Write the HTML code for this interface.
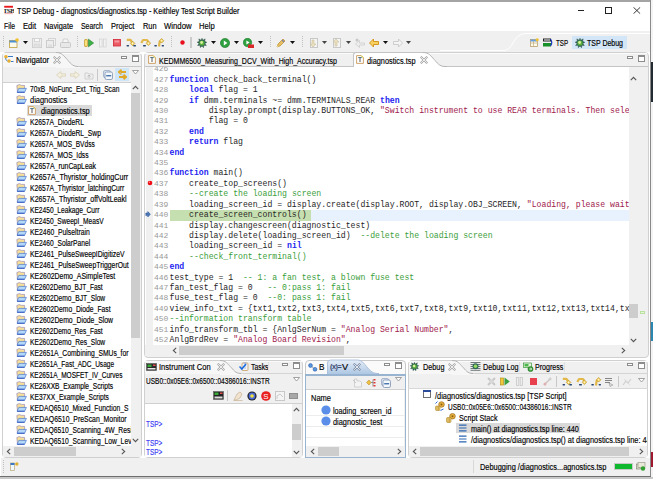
<!DOCTYPE html>
<html><head><meta charset="utf-8"><style>
html,body{margin:0;padding:0;width:653px;height:479px;overflow:hidden;background:#fff}
body{position:relative;font-family:"Liberation Sans", sans-serif}
div,svg{position:absolute}
svg *{position:static}
.t{white-space:pre;font-family:"Liberation Sans", sans-serif}
.u{-webkit-text-stroke:0.15px currentColor}
span{position:static}
</style></head><body>
<div style="left:0px;top:0px;width:653px;height:479px;background:#ffffff"></div>
<div style="left:651px;top:0px;width:2px;height:479px;background:#f4f4f4"></div>
<div style="left:651px;top:62px;width:2px;height:40px;background:#222a32"></div>
<div style="left:651px;top:322px;width:2px;height:19px;background:#2a88b0"></div>
<div style="left:651px;top:452px;width:2px;height:15px;background:#a01830"></div>
<div style="left:0px;top:477px;width:653px;height:2px;background:#c8c8c8"></div>
<div style="left:0px;top:0px;width:651px;height:2px;background:#a4a4a4"></div>
<div style="left:650px;top:0px;width:1px;height:477px;background:#8a8a8a"></div>
<div style="left:0px;top:476px;width:651px;height:1px;background:#6e6e6e"></div>
<svg style="left:4px;top:5px" width="10" height="10" viewBox="0 0 10 10"><rect x="0.2" y="0.8" width="8.8" height="1.9" fill="#e8181c"/><text x="4.6" y="8.4" font-size="7" font-family="Liberation Serif" font-weight="bold" text-anchor="middle" fill="#2a2a2a" letter-spacing="-0.6" transform="scale(1,0.95)">TSB</text><rect x="0.5" y="8.4" width="8.2" height="0.7" fill="#f08080"/></svg>
<div class="t u" style="left:16.90px;top:5.80px;line-height:10px;font-size:8.4px;transform:scaleX(0.8648);transform-origin:0 0;color:#000">TSP Debug - diagnostics/diagnostics.tsp - Keithley Test Script Builder</div>
<div style="left:578px;top:10px;width:6px;height:1px;background:#222"></div>
<div style="left:605px;top:7px;width:6px;height:6px;border:1px solid #222;box-sizing:border-box;width:7px;height:7px"></div>
<svg style="left:633px;top:7px" width="8" height="7" viewBox="0 0 8 7"><path d="M0.5 0.3 L7.2 6.7 M7.2 0.3 L0.5 6.7" stroke="#222" stroke-width="0.9"/></svg>
<div class="t u" style="left:3.60px;top:21.30px;line-height:10px;font-size:8.4px;transform:scaleX(0.8201);transform-origin:0 0;color:#000">File</div>
<div class="t u" style="left:22.90px;top:21.30px;line-height:10px;font-size:8.4px;transform:scaleX(0.9120);transform-origin:0 0;color:#000">Edit</div>
<div class="t u" style="left:43.80px;top:21.30px;line-height:10px;font-size:8.4px;transform:scaleX(0.8778);transform-origin:0 0;color:#000">Navigate</div>
<div class="t u" style="left:81.00px;top:21.30px;line-height:10px;font-size:8.4px;transform:scaleX(0.8266);transform-origin:0 0;color:#000">Search</div>
<div class="t u" style="left:111.00px;top:21.30px;line-height:10px;font-size:8.4px;transform:scaleX(0.8913);transform-origin:0 0;color:#000">Project</div>
<div class="t u" style="left:142.50px;top:21.30px;line-height:10px;font-size:8.4px;transform:scaleX(0.8826);transform-origin:0 0;color:#000">Run</div>
<div class="t u" style="left:163.80px;top:21.30px;line-height:10px;font-size:8.4px;transform:scaleX(0.9272);transform-origin:0 0;color:#000">Window</div>
<div class="t u" style="left:199.30px;top:21.30px;line-height:10px;font-size:8.4px;transform:scaleX(0.9088);transform-origin:0 0;color:#000">Help</div>
<div style="left:0px;top:31px;width:650px;height:21px;background:#f0f0f0"></div>
<svg style="left:3px;top:36px" width="2" height="12"><rect x="0" y="0" width="1" height="1" fill="#c0c0c0"/><rect x="0" y="2" width="1" height="1" fill="#c0c0c0"/><rect x="0" y="4" width="1" height="1" fill="#c0c0c0"/><rect x="0" y="6" width="1" height="1" fill="#c0c0c0"/><rect x="0" y="8" width="1" height="1" fill="#c0c0c0"/><rect x="0" y="10" width="1" height="1" fill="#c0c0c0"/></svg>
<svg style="left:9px;top:38px" width="10" height="10" viewBox="0 0 10 10"><rect x="0.5" y="2.5" width="7.5" height="7" fill="#fdfbe8" stroke="#c8b060" stroke-width="1"/><rect x="0.5" y="2.5" width="7.5" height="2" fill="#4a90d9"/><circle cx="8" cy="2" r="1.8" fill="#f0c030"/></svg>
<svg style="left:23px;top:41px" width="5" height="3" viewBox="0 0 5 3"><path d="M0 0 L5 0 L2.5 3 Z" fill="#111"/></svg>
<svg style="left:32px;top:38px" width="10" height="10" viewBox="0 0 10 10"><rect x="0.5" y="0.5" width="9" height="9" fill="#eeeeee" stroke="#d0d0d0"/><rect x="2.5" y="0.5" width="5" height="3.2" fill="#fafafa" stroke="#d4d4d4"/><rect x="2" y="6" width="6" height="3.5" fill="#e2e2e2" stroke="#d4d4d4" stroke-width="0.6"/></svg>
<svg style="left:46px;top:38px" width="10" height="10" viewBox="0 0 10 10"><rect x="2.5" y="0.5" width="7" height="7" fill="#f0f0f0" stroke="#d4d4d4"/><rect x="0.5" y="2.5" width="7" height="7" fill="#ececec" stroke="#cccccc"/><rect x="2" y="6.5" width="4" height="2.5" fill="#dedede"/></svg>
<svg style="left:60px;top:38px" width="11" height="10" viewBox="0 0 11 10"><path d="M2.5 4.5 L3.5 1 L7.5 1 L8.5 4.5" fill="#f6f6f6" stroke="#d0d0d0"/><rect x="0.5" y="4.5" width="10" height="5" rx="1" fill="#e8e8e8" stroke="#c8c8c8"/></svg>
<svg style="left:77px;top:36px" width="2" height="12"><rect x="0" y="0" width="1" height="1" fill="#c0c0c0"/><rect x="0" y="2" width="1" height="1" fill="#c0c0c0"/><rect x="0" y="4" width="1" height="1" fill="#c0c0c0"/><rect x="0" y="6" width="1" height="1" fill="#c0c0c0"/><rect x="0" y="8" width="1" height="1" fill="#c0c0c0"/><rect x="0" y="10" width="1" height="1" fill="#c0c0c0"/></svg>
<svg style="left:84px;top:38px" width="10" height="10" viewBox="0 0 10 10"><rect x="0.6" y="1.5" width="2.8" height="7" rx="0.6" fill="#f4d050" stroke="#c09020" stroke-width="0.7"/><rect x="1.4" y="2.5" width="1.2" height="5" fill="#fff0a0"/><path d="M4.5 1.2 L9.6 5 L4.5 8.8 Z" fill="#40b048" stroke="#208028" stroke-width="0.6"/></svg>
<svg style="left:99px;top:38px" width="8" height="10" viewBox="0 0 8 10"><rect x="0.5" y="1" width="2.6" height="8" fill="#f2f2f2" stroke="#d4d4d4" stroke-width="0.8"/><rect x="4.5" y="1" width="2.6" height="8" fill="#f2f2f2" stroke="#d4d4d4" stroke-width="0.8"/></svg>
<svg style="left:113px;top:39px" width="8" height="8" viewBox="0 0 8 8"><rect x="0.4" y="0.4" width="7" height="6.6" fill="#ec5a64" stroke="#d02838" stroke-width="0.8"/><rect x="1.5" y="1.5" width="4.8" height="2" fill="#f59aa0"/></svg>
<svg style="left:126px;top:38px" width="11" height="10" viewBox="0 0 11 10"><path d="M0.8 1.8 L4.5 1.8 L6.3 4.6" stroke="#e2b84a" stroke-width="2.2" fill="none" stroke-linejoin="round"/><path d="M6.6 3.1000000000000005 L8.899999999999999 5.4 L6.6 7.7 L4.3 5.4 Z" fill="#f4d060" stroke="#b89028" stroke-width="0.6"/><circle cx="6.6" cy="5.4" r="0.8" fill="#fff8d0"/><rect x="0.5" y="7" width="2.6" height="1.4" rx="0.6" fill="#2a4670"/><rect x="7.2" y="7" width="2.8" height="1.4" rx="0.6" fill="#2a4670"/></svg>
<svg style="left:140px;top:38px" width="11" height="10" viewBox="0 0 11 10"><path d="M1.3 5 L3 2 L7 2 L8.4 4.2" stroke="#e2b84a" stroke-width="2.2" fill="none" stroke-linejoin="round"/><path d="M8.4 2.9000000000000004 L10.7 5.2 L8.4 7.5 L6.1000000000000005 5.2 Z" fill="#f4d060" stroke="#b89028" stroke-width="0.6"/><circle cx="8.4" cy="5.2" r="0.8" fill="#fff8d0"/><rect x="3" y="7" width="3" height="1.4" rx="0.6" fill="#2a4670"/></svg>
<svg style="left:154px;top:38px" width="11" height="10" viewBox="0 0 11 10"><rect x="0.3" y="7" width="2.6" height="1.4" rx="0.6" fill="#2a4670"/><path d="M5 8.5 L5.6 4 L7.2 3" stroke="#e2b84a" stroke-width="2.2" fill="none" stroke-linejoin="round"/><path d="M7.6 0.5 L9.899999999999999 2.8 L7.6 5.1 L5.3 2.8 Z" fill="#f4d060" stroke="#b89028" stroke-width="0.6"/><circle cx="7.6" cy="2.8" r="0.8" fill="#fff8d0"/><rect x="7.6" y="7" width="2.4" height="1.4" rx="0.6" fill="#2a4670"/></svg>
<svg style="left:171px;top:36px" width="2" height="12"><rect x="0" y="0" width="1" height="1" fill="#c0c0c0"/><rect x="0" y="2" width="1" height="1" fill="#c0c0c0"/><rect x="0" y="4" width="1" height="1" fill="#c0c0c0"/><rect x="0" y="6" width="1" height="1" fill="#c0c0c0"/><rect x="0" y="8" width="1" height="1" fill="#c0c0c0"/><rect x="0" y="10" width="1" height="1" fill="#c0c0c0"/></svg>
<svg style="left:180px;top:40px" width="5" height="5" viewBox="0 0 5 5"><circle cx="2.5" cy="2.5" r="2.2" fill="#e8101c"/></svg>
<div style="left:190px;top:37px;width:2px;height:11px;background:#cacaca"></div>
<svg style="left:197px;top:38px" width="10" height="10" viewBox="0 0 10 10"><g transform="scale(1.0)"><path d="M5 0.3 L5.9 2.2 L8.2 0.9 L7.6 3.3 L9.8 4.3 L7.9 5.4 L9.3 7.6 L6.9 7.3 L6.5 9.7 L5 8 L3.3 9.6 L3.1 7.3 L0.6 7.5 L2.1 5.4 L0.2 4.2 L2.4 3.3 L1.8 0.9 L4.1 2.2 Z" fill="#2e6a58" stroke="#1a3a30" stroke-width="0.4"/><circle cx="5" cy="5" r="2.6" fill="#5aae3a"/><circle cx="4.6" cy="4.5" r="1.4" fill="#d8f0a0"/></g></svg>
<svg style="left:211px;top:41px" width="5" height="3" viewBox="0 0 5 3"><path d="M0 0 L5 0 L2.5 3 Z" fill="#111"/></svg>
<svg style="left:220px;top:38px" width="10" height="10" viewBox="0 0 10 10"><circle cx="5" cy="5" r="4.6" fill="#2ea040" stroke="#1a7a2a" stroke-width="0.6"/><path d="M3.8 2.6 L7.4 5 L3.8 7.4 Z" fill="#fff"/></svg>
<svg style="left:234px;top:41px" width="5" height="3" viewBox="0 0 5 3"><path d="M0 0 L5 0 L2.5 3 Z" fill="#111"/></svg>
<svg style="left:243px;top:38px" width="11" height="10" viewBox="0 0 11 10"><circle cx="4.5" cy="4.5" r="4.2" fill="#2ea040" stroke="#1a7a2a" stroke-width="0.6"/><path d="M3.4 2.4 L6.6 4.5 L3.4 6.6 Z" fill="#fff"/><rect x="5" y="6.5" width="6" height="3.5" fill="#d82828"/></svg>
<svg style="left:258px;top:41px" width="5" height="3" viewBox="0 0 5 3"><path d="M0 0 L5 0 L2.5 3 Z" fill="#111"/></svg>
<svg style="left:270px;top:36px" width="2" height="12"><rect x="0" y="0" width="1" height="1" fill="#c0c0c0"/><rect x="0" y="2" width="1" height="1" fill="#c0c0c0"/><rect x="0" y="4" width="1" height="1" fill="#c0c0c0"/><rect x="0" y="6" width="1" height="1" fill="#c0c0c0"/><rect x="0" y="8" width="1" height="1" fill="#c0c0c0"/><rect x="0" y="10" width="1" height="1" fill="#c0c0c0"/></svg>
<svg style="left:276px;top:38px" width="10" height="10" viewBox="0 0 10 10"><path d="M1 9 L2 6 L7 1 L9 3 L4 8 Z" fill="#e8c060" stroke="#b08020" stroke-width="0.6"/><path d="M6 2 L8 4" stroke="#8080a0" stroke-width="1.2"/><path d="M1 9 L2.5 8.5 L1.5 7.5 Z" fill="#fff8c0"/></svg>
<svg style="left:290px;top:41px" width="5" height="3" viewBox="0 0 5 3"><path d="M0 0 L5 0 L2.5 3 Z" fill="#111"/></svg>
<svg style="left:302px;top:36px" width="2" height="12"><rect x="0" y="0" width="1" height="1" fill="#c0c0c0"/><rect x="0" y="2" width="1" height="1" fill="#c0c0c0"/><rect x="0" y="4" width="1" height="1" fill="#c0c0c0"/><rect x="0" y="6" width="1" height="1" fill="#c0c0c0"/><rect x="0" y="8" width="1" height="1" fill="#c0c0c0"/><rect x="0" y="10" width="1" height="1" fill="#c0c0c0"/></svg>
<svg style="left:308px;top:38px" width="10" height="10" viewBox="0 0 10 10"><rect x="2.5" y="0.5" width="7" height="9" fill="#f4f4f4" stroke="#c8c8c8"/><path d="M4 2 L4 6 L2 6 L5 9 L8 6 L6 6 L6 2 Z" fill="#e8e0c0" stroke="#c8b890" stroke-width="0.5"/></svg>
<svg style="left:322px;top:41px" width="5" height="3" viewBox="0 0 5 3"><path d="M0 0 L5 0 L2.5 3 Z" fill="#444"/></svg>
<svg style="left:331px;top:38px" width="10" height="10" viewBox="0 0 10 10"><rect x="2.5" y="0.5" width="7" height="9" fill="#f4f4f4" stroke="#c8c8c8"/><path d="M4 8 L4 4 L2 4 L5 1 L8 4 L6 4 L6 8 Z" fill="#e8e0c0" stroke="#c8b890" stroke-width="0.5"/></svg>
<svg style="left:346px;top:41px" width="5" height="3" viewBox="0 0 5 3"><path d="M0 0 L5 0 L2.5 3 Z" fill="#444"/></svg>
<svg style="left:355px;top:38px" width="10" height="10" viewBox="0 0 10 10"><path d="M9.5 5 L4.5 5 L4.5 2.5 L0.5 6 L4.5 9.5 L4.5 7 L9.5 7 Z" fill="#eeeeee" stroke="#c8c8c8" stroke-width="0.7"/><circle cx="2" cy="2" r="1.5" fill="#c8c8c8"/></svg>
<svg style="left:369px;top:38px" width="10" height="10" viewBox="0 0 10 10"><path d="M9.5 3.5 L4.5 3.5 L4.5 1 L0.5 5 L4.5 9 L4.5 6.5 L9.5 6.5 Z" fill="#f8d060" stroke="#d09010" stroke-width="0.9"/></svg>
<svg style="left:383px;top:41px" width="5" height="3" viewBox="0 0 5 3"><path d="M0 0 L5 0 L2.5 3 Z" fill="#111"/></svg>
<svg style="left:393px;top:38px" width="10" height="10" viewBox="0 0 10 10"><path d="M0.5 3.5 L5.5 3.5 L5.5 1 L9.5 5 L5.5 9 L5.5 6.5 L0.5 6.5 Z" fill="#f4f4f4" stroke="#c8c8c8" stroke-width="0.9"/></svg>
<svg style="left:406px;top:41px" width="5" height="3" viewBox="0 0 5 3"><path d="M0 0 L5 0 L2.5 3 Z" fill="#444"/></svg>
<svg style="left:440px;top:30px" width="210" height="23" viewBox="0 0 210 23"><path d="M0 20.5 L64 20.5 C74 20.5 72 3.5 86 3.5 L210 3.5" stroke="#ffffff" stroke-width="1" fill="none"/></svg>
<svg style="left:530px;top:38px" width="9" height="9" viewBox="0 0 9 9"><rect x="0.5" y="1.5" width="7" height="7" fill="#fdfbe8" stroke="#b8a070" stroke-width="0.8"/><rect x="0.5" y="1.5" width="7" height="2" fill="#6aa0e0"/><path d="M1 5 L7 5 M3.5 3 L3.5 8.5" stroke="#b8a070" stroke-width="0.6"/><circle cx="7.2" cy="1.8" r="1.6" fill="#f0c030"/></svg>
<svg style="left:543px;top:38px" width="10" height="9" viewBox="0 0 10 9"><rect x="0" y="0.5" width="8" height="3" fill="#222"/><rect x="1" y="1.5" width="6" height="1" fill="#fff"/><rect x="0" y="5" width="8" height="3.5" fill="#189028"/><path d="M7.5 1 Q10 4.5 7.5 8" stroke="#1838c0" stroke-width="1.2" fill="none"/></svg>
<div class="t u" style="left:555.60px;top:38.30px;line-height:10px;font-size:8.4px;transform:scaleX(0.7468);transform-origin:0 0;color:#000">TSP</div>
<div style="left:572px;top:36px;width:55px;height:13px;background:#d2e6f8"></div>
<svg style="left:575px;top:38px" width="10" height="10" viewBox="0 0 10 10"><g transform="scale(1.0)"><path d="M5 0.3 L5.9 2.2 L8.2 0.9 L7.6 3.3 L9.8 4.3 L7.9 5.4 L9.3 7.6 L6.9 7.3 L6.5 9.7 L5 8 L3.3 9.6 L3.1 7.3 L0.6 7.5 L2.1 5.4 L0.2 4.2 L2.4 3.3 L1.8 0.9 L4.1 2.2 Z" fill="#2e6a58" stroke="#1a3a30" stroke-width="0.4"/><circle cx="5" cy="5" r="2.6" fill="#5aae3a"/><circle cx="4.6" cy="4.5" r="1.4" fill="#d8f0a0"/></g></svg>
<div class="t u" style="left:587.40px;top:38.30px;line-height:10px;font-size:8.4px;transform:scaleX(0.8343);transform-origin:0 0;color:#000">TSP Debug</div>
<div style="left:1px;top:458px;width:649px;height:18px;background:#f0f0f0"></div>
<div style="left:2px;top:52px;width:140px;height:406px;border:1px solid #d0d0d0;border-radius:4px;box-sizing:border-box;background:#f0f0f0"></div>
<div style="left:3px;top:53px;width:138px;height:1px;background:#fbfbfb"></div>
<div style="left:3px;top:53px;width:54px;height:14px;background:#f7f7f7;border-top-left-radius:3px"></div>
<svg style="left:56px;top:52px" width="24" height="16" viewBox="0 0 24 16"><path d="M0 0.5 C6.16 0.5 7.92 4.20 11.00 7.28 C14.08 10.36 15.84 14.50 22 14.5 L24 14.5 L24 16 L0 16 Z" fill="#f7f7f7"/><path d="M0 0.5 C6.16 0.5 7.92 4.20 11.00 7.28 C14.08 10.36 15.84 14.50 22 14.5 L24 14.5" stroke="#b4b4b4" stroke-width="1" fill="none"/></svg>
<div style="left:78px;top:66px;width:63px;height:1px;background:#c8c8c8"></div>
<svg style="left:4px;top:55px" width="10" height="8" viewBox="0 0 10 8"><circle cx="2" cy="1.8" r="1.8" fill="#e8b030"/><circle cx="5" cy="6" r="1.8" fill="#e8b030"/><path d="M4 1.5 L9 1.5 M7 6.5 L9.5 6.5" stroke="#3a78c8" stroke-width="1.2"/><path d="M1.5 3 Q1.5 5.5 3.5 6" stroke="#3a78c8" stroke-width="0.8" fill="none"/></svg>
<div class="t u" style="left:16.00px;top:55.30px;line-height:10px;font-size:8.4px;transform:scaleX(0.9208);transform-origin:0 0;color:#000">Navigator</div>
<svg style="left:53px;top:56px" width="8" height="8" viewBox="0 0 8 8"><path d="M1.5 1.5 L6.5 6.5 M6.5 1.5 L1.5 6.5" stroke="#a8a8a8" stroke-width="2.2" stroke-linecap="square"/><path d="M1.5 1.5 L6.5 6.5 M6.5 1.5 L1.5 6.5" stroke="#fff" stroke-width="0.8" stroke-linecap="square"/></svg>
<div style="left:121px;top:56px;width:6px;height:3px;border:1px solid #8c8c8c;box-sizing:border-box;background:#fff"></div>
<div style="left:132px;top:55px;width:7px;height:7px;border:1px solid #8c8c8c;border-top-width:2px;box-sizing:border-box;background:#fff"></div>
<svg style="left:56px;top:71px" width="10" height="8" viewBox="0 0 10 8"><path d="M9.5 2.8 L5 2.8 L5 0.5 L0.5 4 L5 7.5 L5 5.2 L9.5 5.2 Z" fill="#f4f0e0" stroke="#d8d0b8" stroke-width="0.8"/></svg>
<svg style="left:70px;top:71px" width="10" height="8" viewBox="0 0 10 8"><path d="M0.5 2.8 L5 2.8 L5 0.5 L9.5 4 L5 7.5 L5 5.2 L0.5 5.2 Z" fill="#f4f0e0" stroke="#d8d0b8" stroke-width="0.8"/></svg>
<svg style="left:84px;top:70px" width="10" height="10" viewBox="0 0 10 10"><path d="M1 3 L4 3 L5 4 L9 4 L9 9 L1 9 Z" fill="#eeeeee" stroke="#c8c8c8" stroke-width="0.8"/><path d="M5 8 L5 5 M3.5 6.5 L5 5 L6.5 6.5" stroke="#b8b8b8" stroke-width="0.9" fill="none"/></svg>
<div style="left:97px;top:69px;width:1px;height:12px;background:#c8c8c8"></div>
<svg style="left:103px;top:70px" width="10" height="10" viewBox="0 0 10 10"><rect x="0.5" y="0.5" width="7" height="7" rx="1.5" fill="#dde6f0" stroke="#8aa0c0" stroke-width="0.7"/><rect x="2" y="2" width="7.5" height="7.5" rx="1.5" fill="#f4f8fc" stroke="#7890b0" stroke-width="0.8"/><rect x="3.2" y="5.1" width="5" height="1.3" fill="#3a6aa8"/></svg>
<div style="left:115px;top:68px;width:14px;height:13px;background:#cfe5f8"></div>
<svg style="left:117px;top:69px" width="11" height="11" viewBox="0 0 11 11"><path d="M9 3 L3 3 M4.5 0.8 L1.8 3 L4.5 5.2" stroke="#e0a828" stroke-width="1.8" fill="none" stroke-linejoin="round"/><path d="M3.5 3.5 L6 7" stroke="#c8c8d0" stroke-width="1"/><path d="M2 8 L8 8 M6.5 5.8 L9.2 8 L6.5 10.2" stroke="#e0a828" stroke-width="1.8" fill="none" stroke-linejoin="round"/></svg>
<svg style="left:132px;top:70px" width="7" height="5" viewBox="0 0 7 5"><path d="M0.5 0.5 L6.5 0.5 L3.5 4 Z" fill="#fff" stroke="#8c8c8c" stroke-width="0.8"/></svg>
<div style="left:2px;top:82px;width:140px;height:1px;background:#d0d0d0"></div>
<div style="left:3px;top:83px;width:138px;height:363px;background:#fff"></div>
<div style="left:3px;top:82px;width:128px;height:364px;overflow:hidden">
<svg style="left:13px;top:1.5px" width="11" height="9" viewBox="0 0 11 9"><path d="M0.8 1.6 L3.2 0.6 L5.6 1.4 L8.6 1.4 L8.6 4.5 L1.5 7.8 Z" fill="#f8e098" stroke="#8a7ab0" stroke-width="0.6"/><path d="M1 8.2 L2.8 4.4 L10.4 4.4 L8.6 8.2 Z" fill="#b4d8f8" stroke="#4a78d0" stroke-width="0.7"/><path d="M1.2 8.3 L8.6 8.3" stroke="#2a50c0" stroke-width="0.9"/></svg>
<div class="t u" style="left:27.10px;top:1.80px;line-height:10px;font-size:8.4px;transform:scaleX(0.7952);transform-origin:0 0;color:#000">70xB_NoFunc_Ext_Trig_Scan</div>
<svg style="left:13px;top:12.5px" width="11" height="9" viewBox="0 0 11 9"><path d="M0.8 1.6 L3.2 0.6 L5.6 1.4 L8.6 1.4 L8.6 4.5 L1.5 7.8 Z" fill="#f8e098" stroke="#8a7ab0" stroke-width="0.6"/><path d="M1 8.2 L2.8 4.4 L10.4 4.4 L8.6 8.2 Z" fill="#b4d8f8" stroke="#4a78d0" stroke-width="0.7"/><path d="M1.2 8.3 L8.6 8.3" stroke="#2a50c0" stroke-width="0.9"/></svg>
<div class="t u" style="left:27.10px;top:12.80px;line-height:10px;font-size:8.4px;transform:scaleX(0.8900);transform-origin:0 0;color:#000">diagnostics</div>
<div style="left:24px;top:22.5px;width:65px;height:11px;background:#d9d9d9"></div>
<svg style="left:25px;top:24px" width="8" height="9" viewBox="0 0 8 9"><path d="M0.6 0.6 L5.2 0.6 L7.4 2.8 L7.4 8.4 L0.6 8.4 Z" fill="#ffffff" stroke="#c8985a" stroke-width="0.9"/><path d="M5.2 0.6 L7.4 2.8" stroke="#d8d040" stroke-width="1"/><path d="M2.2 2.6 L5.8 2.6" stroke="#3a6a7a" stroke-width="0.9"/><path d="M4 2.6 L4 7" stroke="#303038" stroke-width="0.8"/></svg>
<div class="t u" style="left:38.30px;top:23.80px;line-height:10px;font-size:8.4px;transform:scaleX(0.8783);transform-origin:0 0;color:#000">diagnostics.tsp</div>
<svg style="left:13px;top:34.5px" width="11" height="9" viewBox="0 0 11 9"><path d="M0.8 1.6 L3.2 0.6 L5.6 1.4 L8.6 1.4 L8.6 4.5 L1.5 7.8 Z" fill="#f8e098" stroke="#8a7ab0" stroke-width="0.6"/><path d="M1 8.2 L2.8 4.4 L10.4 4.4 L8.6 8.2 Z" fill="#b4d8f8" stroke="#4a78d0" stroke-width="0.7"/><path d="M1.2 8.3 L8.6 8.3" stroke="#2a50c0" stroke-width="0.9"/></svg>
<div class="t u" style="left:27.10px;top:34.80px;line-height:10px;font-size:8.4px;transform:scaleX(0.8045);transform-origin:0 0;color:#000">K2657A_DiodeRL</div>
<svg style="left:13px;top:45.5px" width="11" height="9" viewBox="0 0 11 9"><path d="M0.8 1.6 L3.2 0.6 L5.6 1.4 L8.6 1.4 L8.6 4.5 L1.5 7.8 Z" fill="#f8e098" stroke="#8a7ab0" stroke-width="0.6"/><path d="M1 8.2 L2.8 4.4 L10.4 4.4 L8.6 8.2 Z" fill="#b4d8f8" stroke="#4a78d0" stroke-width="0.7"/><path d="M1.2 8.3 L8.6 8.3" stroke="#2a50c0" stroke-width="0.9"/></svg>
<div class="t u" style="left:27.10px;top:45.80px;line-height:10px;font-size:8.4px;transform:scaleX(0.8067);transform-origin:0 0;color:#000">K2657A_DiodeRL_Swp</div>
<svg style="left:13px;top:56.5px" width="11" height="9" viewBox="0 0 11 9"><path d="M0.8 1.6 L3.2 0.6 L5.6 1.4 L8.6 1.4 L8.6 4.5 L1.5 7.8 Z" fill="#f8e098" stroke="#8a7ab0" stroke-width="0.6"/><path d="M1 8.2 L2.8 4.4 L10.4 4.4 L8.6 8.2 Z" fill="#b4d8f8" stroke="#4a78d0" stroke-width="0.7"/><path d="M1.2 8.3 L8.6 8.3" stroke="#2a50c0" stroke-width="0.9"/></svg>
<div class="t u" style="left:27.10px;top:56.80px;line-height:10px;font-size:8.4px;transform:scaleX(0.7853);transform-origin:0 0;color:#000">K2657A_MOS_BVdss</div>
<svg style="left:13px;top:67.5px" width="11" height="9" viewBox="0 0 11 9"><path d="M0.8 1.6 L3.2 0.6 L5.6 1.4 L8.6 1.4 L8.6 4.5 L1.5 7.8 Z" fill="#f8e098" stroke="#8a7ab0" stroke-width="0.6"/><path d="M1 8.2 L2.8 4.4 L10.4 4.4 L8.6 8.2 Z" fill="#b4d8f8" stroke="#4a78d0" stroke-width="0.7"/><path d="M1.2 8.3 L8.6 8.3" stroke="#2a50c0" stroke-width="0.9"/></svg>
<div class="t u" style="left:27.10px;top:67.80px;line-height:10px;font-size:8.4px;transform:scaleX(0.7957);transform-origin:0 0;color:#000">K2657A_MOS_Idss</div>
<svg style="left:13px;top:78.5px" width="11" height="9" viewBox="0 0 11 9"><path d="M0.8 1.6 L3.2 0.6 L5.6 1.4 L8.6 1.4 L8.6 4.5 L1.5 7.8 Z" fill="#f8e098" stroke="#8a7ab0" stroke-width="0.6"/><path d="M1 8.2 L2.8 4.4 L10.4 4.4 L8.6 8.2 Z" fill="#b4d8f8" stroke="#4a78d0" stroke-width="0.7"/><path d="M1.2 8.3 L8.6 8.3" stroke="#2a50c0" stroke-width="0.9"/></svg>
<div class="t u" style="left:27.10px;top:78.80px;line-height:10px;font-size:8.4px;transform:scaleX(0.8242);transform-origin:0 0;color:#000">K2657A_runCapLeak</div>
<svg style="left:13px;top:89.5px" width="11" height="9" viewBox="0 0 11 9"><path d="M0.8 1.6 L3.2 0.6 L5.6 1.4 L8.6 1.4 L8.6 4.5 L1.5 7.8 Z" fill="#f8e098" stroke="#8a7ab0" stroke-width="0.6"/><path d="M1 8.2 L2.8 4.4 L10.4 4.4 L8.6 8.2 Z" fill="#b4d8f8" stroke="#4a78d0" stroke-width="0.7"/><path d="M1.2 8.3 L8.6 8.3" stroke="#2a50c0" stroke-width="0.9"/></svg>
<div class="t u" style="left:27.10px;top:89.80px;line-height:10px;font-size:8.4px;transform:scaleX(0.8541);transform-origin:0 0;color:#000">K2657A_Thyristor_holdingCurr</div>
<svg style="left:13px;top:100.5px" width="11" height="9" viewBox="0 0 11 9"><path d="M0.8 1.6 L3.2 0.6 L5.6 1.4 L8.6 1.4 L8.6 4.5 L1.5 7.8 Z" fill="#f8e098" stroke="#8a7ab0" stroke-width="0.6"/><path d="M1 8.2 L2.8 4.4 L10.4 4.4 L8.6 8.2 Z" fill="#b4d8f8" stroke="#4a78d0" stroke-width="0.7"/><path d="M1.2 8.3 L8.6 8.3" stroke="#2a50c0" stroke-width="0.9"/></svg>
<div class="t u" style="left:27.10px;top:100.80px;line-height:10px;font-size:8.4px;transform:scaleX(0.8076);transform-origin:0 0;color:#000">K2657A_Thyristor_latchingCurr</div>
<svg style="left:13px;top:111.5px" width="11" height="9" viewBox="0 0 11 9"><path d="M0.8 1.6 L3.2 0.6 L5.6 1.4 L8.6 1.4 L8.6 4.5 L1.5 7.8 Z" fill="#f8e098" stroke="#8a7ab0" stroke-width="0.6"/><path d="M1 8.2 L2.8 4.4 L10.4 4.4 L8.6 8.2 Z" fill="#b4d8f8" stroke="#4a78d0" stroke-width="0.7"/><path d="M1.2 8.3 L8.6 8.3" stroke="#2a50c0" stroke-width="0.9"/></svg>
<div class="t u" style="left:27.10px;top:111.80px;line-height:10px;font-size:8.4px;transform:scaleX(0.8413);transform-origin:0 0;color:#000">K2657A_Thyristor_offVoltLeakl</div>
<svg style="left:13px;top:122.5px" width="11" height="9" viewBox="0 0 11 9"><path d="M0.8 1.6 L3.2 0.6 L5.6 1.4 L8.6 1.4 L8.6 4.5 L1.5 7.8 Z" fill="#f8e098" stroke="#8a7ab0" stroke-width="0.6"/><path d="M1 8.2 L2.8 4.4 L10.4 4.4 L8.6 8.2 Z" fill="#b4d8f8" stroke="#4a78d0" stroke-width="0.7"/><path d="M1.2 8.3 L8.6 8.3" stroke="#2a50c0" stroke-width="0.9"/></svg>
<div class="t u" style="left:27.10px;top:122.80px;line-height:10px;font-size:8.4px;transform:scaleX(0.7939);transform-origin:0 0;color:#000">KE2450_Leakage_Curr</div>
<svg style="left:13px;top:133.5px" width="11" height="9" viewBox="0 0 11 9"><path d="M0.8 1.6 L3.2 0.6 L5.6 1.4 L8.6 1.4 L8.6 4.5 L1.5 7.8 Z" fill="#f8e098" stroke="#8a7ab0" stroke-width="0.6"/><path d="M1 8.2 L2.8 4.4 L10.4 4.4 L8.6 8.2 Z" fill="#b4d8f8" stroke="#4a78d0" stroke-width="0.7"/><path d="M1.2 8.3 L8.6 8.3" stroke="#2a50c0" stroke-width="0.9"/></svg>
<div class="t u" style="left:27.10px;top:133.80px;line-height:10px;font-size:8.4px;transform:scaleX(0.7913);transform-origin:0 0;color:#000">KE2450_SweepI_MeasV</div>
<svg style="left:13px;top:144.5px" width="11" height="9" viewBox="0 0 11 9"><path d="M0.8 1.6 L3.2 0.6 L5.6 1.4 L8.6 1.4 L8.6 4.5 L1.5 7.8 Z" fill="#f8e098" stroke="#8a7ab0" stroke-width="0.6"/><path d="M1 8.2 L2.8 4.4 L10.4 4.4 L8.6 8.2 Z" fill="#b4d8f8" stroke="#4a78d0" stroke-width="0.7"/><path d="M1.2 8.3 L8.6 8.3" stroke="#2a50c0" stroke-width="0.9"/></svg>
<div class="t u" style="left:27.10px;top:144.80px;line-height:10px;font-size:8.4px;transform:scaleX(0.8119);transform-origin:0 0;color:#000">KE2460_Pulseltrain</div>
<svg style="left:13px;top:155.5px" width="11" height="9" viewBox="0 0 11 9"><path d="M0.8 1.6 L3.2 0.6 L5.6 1.4 L8.6 1.4 L8.6 4.5 L1.5 7.8 Z" fill="#f8e098" stroke="#8a7ab0" stroke-width="0.6"/><path d="M1 8.2 L2.8 4.4 L10.4 4.4 L8.6 8.2 Z" fill="#b4d8f8" stroke="#4a78d0" stroke-width="0.7"/><path d="M1.2 8.3 L8.6 8.3" stroke="#2a50c0" stroke-width="0.9"/></svg>
<div class="t u" style="left:27.10px;top:155.80px;line-height:10px;font-size:8.4px;transform:scaleX(0.7971);transform-origin:0 0;color:#000">KE2460_SolarPanel</div>
<svg style="left:13px;top:166.5px" width="11" height="9" viewBox="0 0 11 9"><path d="M0.8 1.6 L3.2 0.6 L5.6 1.4 L8.6 1.4 L8.6 4.5 L1.5 7.8 Z" fill="#f8e098" stroke="#8a7ab0" stroke-width="0.6"/><path d="M1 8.2 L2.8 4.4 L10.4 4.4 L8.6 8.2 Z" fill="#b4d8f8" stroke="#4a78d0" stroke-width="0.7"/><path d="M1.2 8.3 L8.6 8.3" stroke="#2a50c0" stroke-width="0.9"/></svg>
<div class="t u" style="left:27.10px;top:166.80px;line-height:10px;font-size:8.4px;transform:scaleX(0.8121);transform-origin:0 0;color:#000">KE2461_PulseSweepIDigitizeV</div>
<svg style="left:13px;top:177.5px" width="11" height="9" viewBox="0 0 11 9"><path d="M0.8 1.6 L3.2 0.6 L5.6 1.4 L8.6 1.4 L8.6 4.5 L1.5 7.8 Z" fill="#f8e098" stroke="#8a7ab0" stroke-width="0.6"/><path d="M1 8.2 L2.8 4.4 L10.4 4.4 L8.6 8.2 Z" fill="#b4d8f8" stroke="#4a78d0" stroke-width="0.7"/><path d="M1.2 8.3 L8.6 8.3" stroke="#2a50c0" stroke-width="0.9"/></svg>
<div class="t u" style="left:27.10px;top:177.80px;line-height:10px;font-size:8.4px;transform:scaleX(0.8176);transform-origin:0 0;color:#000">KE2461_PulseSweepTriggerOut</div>
<svg style="left:13px;top:188.5px" width="11" height="9" viewBox="0 0 11 9"><path d="M0.8 1.6 L3.2 0.6 L5.6 1.4 L8.6 1.4 L8.6 4.5 L1.5 7.8 Z" fill="#f8e098" stroke="#8a7ab0" stroke-width="0.6"/><path d="M1 8.2 L2.8 4.4 L10.4 4.4 L8.6 8.2 Z" fill="#b4d8f8" stroke="#4a78d0" stroke-width="0.7"/><path d="M1.2 8.3 L8.6 8.3" stroke="#2a50c0" stroke-width="0.9"/></svg>
<div class="t u" style="left:27.10px;top:188.80px;line-height:10px;font-size:8.4px;transform:scaleX(0.8239);transform-origin:0 0;color:#000">KE2602Demo_ASimpleTest</div>
<svg style="left:13px;top:199.5px" width="11" height="9" viewBox="0 0 11 9"><path d="M0.8 1.6 L3.2 0.6 L5.6 1.4 L8.6 1.4 L8.6 4.5 L1.5 7.8 Z" fill="#f8e098" stroke="#8a7ab0" stroke-width="0.6"/><path d="M1 8.2 L2.8 4.4 L10.4 4.4 L8.6 8.2 Z" fill="#b4d8f8" stroke="#4a78d0" stroke-width="0.7"/><path d="M1.2 8.3 L8.6 8.3" stroke="#2a50c0" stroke-width="0.9"/></svg>
<div class="t u" style="left:27.10px;top:199.80px;line-height:10px;font-size:8.4px;transform:scaleX(0.7846);transform-origin:0 0;color:#000">KE2602Demo_BJT_Fast</div>
<svg style="left:13px;top:210.5px" width="11" height="9" viewBox="0 0 11 9"><path d="M0.8 1.6 L3.2 0.6 L5.6 1.4 L8.6 1.4 L8.6 4.5 L1.5 7.8 Z" fill="#f8e098" stroke="#8a7ab0" stroke-width="0.6"/><path d="M1 8.2 L2.8 4.4 L10.4 4.4 L8.6 8.2 Z" fill="#b4d8f8" stroke="#4a78d0" stroke-width="0.7"/><path d="M1.2 8.3 L8.6 8.3" stroke="#2a50c0" stroke-width="0.9"/></svg>
<div class="t u" style="left:27.10px;top:210.80px;line-height:10px;font-size:8.4px;transform:scaleX(0.7955);transform-origin:0 0;color:#000">KE2602Demo_BJT_Slow</div>
<svg style="left:13px;top:221.5px" width="11" height="9" viewBox="0 0 11 9"><path d="M0.8 1.6 L3.2 0.6 L5.6 1.4 L8.6 1.4 L8.6 4.5 L1.5 7.8 Z" fill="#f8e098" stroke="#8a7ab0" stroke-width="0.6"/><path d="M1 8.2 L2.8 4.4 L10.4 4.4 L8.6 8.2 Z" fill="#b4d8f8" stroke="#4a78d0" stroke-width="0.7"/><path d="M1.2 8.3 L8.6 8.3" stroke="#2a50c0" stroke-width="0.9"/></svg>
<div class="t u" style="left:27.10px;top:221.80px;line-height:10px;font-size:8.4px;transform:scaleX(0.8086);transform-origin:0 0;color:#000">KE2602Demo_Diode_Fast</div>
<svg style="left:13px;top:232.5px" width="11" height="9" viewBox="0 0 11 9"><path d="M0.8 1.6 L3.2 0.6 L5.6 1.4 L8.6 1.4 L8.6 4.5 L1.5 7.8 Z" fill="#f8e098" stroke="#8a7ab0" stroke-width="0.6"/><path d="M1 8.2 L2.8 4.4 L10.4 4.4 L8.6 8.2 Z" fill="#b4d8f8" stroke="#4a78d0" stroke-width="0.7"/><path d="M1.2 8.3 L8.6 8.3" stroke="#2a50c0" stroke-width="0.9"/></svg>
<div class="t u" style="left:27.10px;top:232.80px;line-height:10px;font-size:8.4px;transform:scaleX(0.8183);transform-origin:0 0;color:#000">KE2602Demo_Diode_Slow</div>
<svg style="left:13px;top:243.5px" width="11" height="9" viewBox="0 0 11 9"><path d="M0.8 1.6 L3.2 0.6 L5.6 1.4 L8.6 1.4 L8.6 4.5 L1.5 7.8 Z" fill="#f8e098" stroke="#8a7ab0" stroke-width="0.6"/><path d="M1 8.2 L2.8 4.4 L10.4 4.4 L8.6 8.2 Z" fill="#b4d8f8" stroke="#4a78d0" stroke-width="0.7"/><path d="M1.2 8.3 L8.6 8.3" stroke="#2a50c0" stroke-width="0.9"/></svg>
<div class="t u" style="left:27.10px;top:243.80px;line-height:10px;font-size:8.4px;transform:scaleX(0.7846);transform-origin:0 0;color:#000">KE2602Demo_Res_Fast</div>
<svg style="left:13px;top:254.5px" width="11" height="9" viewBox="0 0 11 9"><path d="M0.8 1.6 L3.2 0.6 L5.6 1.4 L8.6 1.4 L8.6 4.5 L1.5 7.8 Z" fill="#f8e098" stroke="#8a7ab0" stroke-width="0.6"/><path d="M1 8.2 L2.8 4.4 L10.4 4.4 L8.6 8.2 Z" fill="#b4d8f8" stroke="#4a78d0" stroke-width="0.7"/><path d="M1.2 8.3 L8.6 8.3" stroke="#2a50c0" stroke-width="0.9"/></svg>
<div class="t u" style="left:27.10px;top:254.80px;line-height:10px;font-size:8.4px;transform:scaleX(0.7955);transform-origin:0 0;color:#000">KE2602Demo_Res_Slow</div>
<svg style="left:13px;top:265.5px" width="11" height="9" viewBox="0 0 11 9"><path d="M0.8 1.6 L3.2 0.6 L5.6 1.4 L8.6 1.4 L8.6 4.5 L1.5 7.8 Z" fill="#f8e098" stroke="#8a7ab0" stroke-width="0.6"/><path d="M1 8.2 L2.8 4.4 L10.4 4.4 L8.6 8.2 Z" fill="#b4d8f8" stroke="#4a78d0" stroke-width="0.7"/><path d="M1.2 8.3 L8.6 8.3" stroke="#2a50c0" stroke-width="0.9"/></svg>
<div class="t u" style="left:27.10px;top:265.80px;line-height:10px;font-size:8.4px;transform:scaleX(0.8076);transform-origin:0 0;color:#000">KE2651A_Combining_SMUs_for</div>
<svg style="left:13px;top:276.5px" width="11" height="9" viewBox="0 0 11 9"><path d="M0.8 1.6 L3.2 0.6 L5.6 1.4 L8.6 1.4 L8.6 4.5 L1.5 7.8 Z" fill="#f8e098" stroke="#8a7ab0" stroke-width="0.6"/><path d="M1 8.2 L2.8 4.4 L10.4 4.4 L8.6 8.2 Z" fill="#b4d8f8" stroke="#4a78d0" stroke-width="0.7"/><path d="M1.2 8.3 L8.6 8.3" stroke="#2a50c0" stroke-width="0.9"/></svg>
<div class="t u" style="left:27.10px;top:276.80px;line-height:10px;font-size:8.4px;transform:scaleX(0.7816);transform-origin:0 0;color:#000">KE2651A_Fast_ADC_Usage</div>
<svg style="left:13px;top:287.5px" width="11" height="9" viewBox="0 0 11 9"><path d="M0.8 1.6 L3.2 0.6 L5.6 1.4 L8.6 1.4 L8.6 4.5 L1.5 7.8 Z" fill="#f8e098" stroke="#8a7ab0" stroke-width="0.6"/><path d="M1 8.2 L2.8 4.4 L10.4 4.4 L8.6 8.2 Z" fill="#b4d8f8" stroke="#4a78d0" stroke-width="0.7"/><path d="M1.2 8.3 L8.6 8.3" stroke="#2a50c0" stroke-width="0.9"/></svg>
<div class="t u" style="left:27.10px;top:287.80px;line-height:10px;font-size:8.4px;transform:scaleX(0.7787);transform-origin:0 0;color:#000">KE2651A_MOSFET_IV_Curves</div>
<svg style="left:13px;top:298.5px" width="11" height="9" viewBox="0 0 11 9"><path d="M0.8 1.6 L3.2 0.6 L5.6 1.4 L8.6 1.4 L8.6 4.5 L1.5 7.8 Z" fill="#f8e098" stroke="#8a7ab0" stroke-width="0.6"/><path d="M1 8.2 L2.8 4.4 L10.4 4.4 L8.6 8.2 Z" fill="#b4d8f8" stroke="#4a78d0" stroke-width="0.7"/><path d="M1.2 8.3 L8.6 8.3" stroke="#2a50c0" stroke-width="0.9"/></svg>
<div class="t u" style="left:27.10px;top:298.80px;line-height:10px;font-size:8.4px;transform:scaleX(0.7929);transform-origin:0 0;color:#000">KE26XXB_Example_Scripts</div>
<svg style="left:13px;top:309.5px" width="11" height="9" viewBox="0 0 11 9"><path d="M0.8 1.6 L3.2 0.6 L5.6 1.4 L8.6 1.4 L8.6 4.5 L1.5 7.8 Z" fill="#f8e098" stroke="#8a7ab0" stroke-width="0.6"/><path d="M1 8.2 L2.8 4.4 L10.4 4.4 L8.6 8.2 Z" fill="#b4d8f8" stroke="#4a78d0" stroke-width="0.7"/><path d="M1.2 8.3 L8.6 8.3" stroke="#2a50c0" stroke-width="0.9"/></svg>
<div class="t u" style="left:27.10px;top:309.80px;line-height:10px;font-size:8.4px;transform:scaleX(0.7954);transform-origin:0 0;color:#000">KE37XX_Example_Scripts</div>
<svg style="left:13px;top:320.5px" width="11" height="9" viewBox="0 0 11 9"><path d="M0.8 1.6 L3.2 0.6 L5.6 1.4 L8.6 1.4 L8.6 4.5 L1.5 7.8 Z" fill="#f8e098" stroke="#8a7ab0" stroke-width="0.6"/><path d="M1 8.2 L2.8 4.4 L10.4 4.4 L8.6 8.2 Z" fill="#b4d8f8" stroke="#4a78d0" stroke-width="0.7"/><path d="M1.2 8.3 L8.6 8.3" stroke="#2a50c0" stroke-width="0.9"/></svg>
<div class="t u" style="left:27.10px;top:320.80px;line-height:10px;font-size:8.4px;transform:scaleX(0.8076);transform-origin:0 0;color:#000">KEDAQ6510_Mixed_Function_S</div>
<svg style="left:13px;top:331.5px" width="11" height="9" viewBox="0 0 11 9"><path d="M0.8 1.6 L3.2 0.6 L5.6 1.4 L8.6 1.4 L8.6 4.5 L1.5 7.8 Z" fill="#f8e098" stroke="#8a7ab0" stroke-width="0.6"/><path d="M1 8.2 L2.8 4.4 L10.4 4.4 L8.6 8.2 Z" fill="#b4d8f8" stroke="#4a78d0" stroke-width="0.7"/><path d="M1.2 8.3 L8.6 8.3" stroke="#2a50c0" stroke-width="0.9"/></svg>
<div class="t u" style="left:27.10px;top:331.80px;line-height:10px;font-size:8.4px;transform:scaleX(0.8236);transform-origin:0 0;color:#000">KEDAQ6510_PreScan_Monitor</div>
<svg style="left:13px;top:342.5px" width="11" height="9" viewBox="0 0 11 9"><path d="M0.8 1.6 L3.2 0.6 L5.6 1.4 L8.6 1.4 L8.6 4.5 L1.5 7.8 Z" fill="#f8e098" stroke="#8a7ab0" stroke-width="0.6"/><path d="M1 8.2 L2.8 4.4 L10.4 4.4 L8.6 8.2 Z" fill="#b4d8f8" stroke="#4a78d0" stroke-width="0.7"/><path d="M1.2 8.3 L8.6 8.3" stroke="#2a50c0" stroke-width="0.9"/></svg>
<div class="t u" style="left:27.10px;top:342.80px;line-height:10px;font-size:8.4px;transform:scaleX(0.8076);transform-origin:0 0;color:#000">KEDAQ6510_Scanning_4W_Resi</div>
<svg style="left:13px;top:353.5px" width="11" height="9" viewBox="0 0 11 9"><path d="M0.8 1.6 L3.2 0.6 L5.6 1.4 L8.6 1.4 L8.6 4.5 L1.5 7.8 Z" fill="#f8e098" stroke="#8a7ab0" stroke-width="0.6"/><path d="M1 8.2 L2.8 4.4 L10.4 4.4 L8.6 8.2 Z" fill="#b4d8f8" stroke="#4a78d0" stroke-width="0.7"/><path d="M1.2 8.3 L8.6 8.3" stroke="#2a50c0" stroke-width="0.9"/></svg>
<div class="t u" style="left:27.10px;top:353.80px;line-height:10px;font-size:8.4px;transform:scaleX(0.8076);transform-origin:0 0;color:#000">KEDAQ6510_Scanning_Low_Lev</div>
</div>
<div style="left:131px;top:82px;width:10px;height:364px;background:#f0f0f0"></div>
<div style="left:131px;top:93px;width:9px;height:245px;background:#cdcdcd"></div>
<svg style="left:132px;top:85px" width="7" height="5" viewBox="0 0 7 5"><path d="M0.8 4.2 L3.5 1.3 L6.2 4.2" stroke="#555" stroke-width="1.1" fill="none"/></svg>
<svg style="left:132px;top:438px" width="7" height="5" viewBox="0 0 7 5"><path d="M0.8 0.8 L3.5 3.7 L6.2 0.8" stroke="#555" stroke-width="1.1" fill="none"/></svg>
<div style="left:3px;top:446px;width:128px;height:11px;background:#f0f0f0"></div>
<div style="left:14px;top:447px;width:62px;height:9px;background:#cdcdcd"></div>
<svg style="left:6px;top:448px" width="5" height="7" viewBox="0 0 5 7"><path d="M4.2 0.8 L1.3 3.5 L4.2 6.2" stroke="#555" stroke-width="1.1" fill="none"/></svg>
<svg style="left:121px;top:448px" width="5" height="7" viewBox="0 0 5 7"><path d="M0.8 0.8 L3.7 3.5 L0.8 6.2" stroke="#555" stroke-width="1.1" fill="none"/></svg>
<div style="left:131px;top:446px;width:10px;height:11px;background:#f0f0f0"></div>
<svg style="left:3px;top:460px" width="2" height="14"><rect x="0" y="0" width="1" height="1" fill="#c0c0c0"/><rect x="0" y="2" width="1" height="1" fill="#c0c0c0"/><rect x="0" y="4" width="1" height="1" fill="#c0c0c0"/><rect x="0" y="6" width="1" height="1" fill="#c0c0c0"/><rect x="0" y="8" width="1" height="1" fill="#c0c0c0"/><rect x="0" y="10" width="1" height="1" fill="#c0c0c0"/><rect x="0" y="12" width="1" height="1" fill="#c0c0c0"/></svg>
<svg style="left:10px;top:462px" width="9" height="9" viewBox="0 0 9 9"><rect x="0.5" y="1" width="4" height="7.5" fill="#f0f8ff" stroke="#b8a878" stroke-width="0.7"/><rect x="0.5" y="1" width="4" height="2" fill="#3a78c8"/><circle cx="6.8" cy="2" r="1.7" fill="#e0b030"/></svg>
<div style="left:144px;top:52px;width:505px;height:306px;border:1px solid #d0d0d0;border-radius:4px;box-sizing:border-box;background:#f0f0f0"></div>
<div style="left:145px;top:53px;width:502px;height:1px;background:#fbfbfb"></div>
<svg style="left:148px;top:55px" width="8" height="9" viewBox="0 0 8 9"><path d="M0.6 0.6 L5.2 0.6 L7.4 2.8 L7.4 8.4 L0.6 8.4 Z" fill="#ffffff" stroke="#c8985a" stroke-width="0.9"/><path d="M5.2 0.6 L7.4 2.8" stroke="#d8d040" stroke-width="1"/><path d="M2.2 2.6 L5.8 2.6" stroke="#3a6a7a" stroke-width="0.9"/><path d="M4 2.6 L4 7" stroke="#303038" stroke-width="0.8"/></svg>
<div class="t u" style="left:158.60px;top:55.80px;line-height:10px;font-size:8.4px;transform:scaleX(0.8428);transform-origin:0 0;color:#000">KEDMM6500_Measuring_DCV_With_High_Accuracy.tsp</div>
<div style="left:353px;top:52px;width:71px;height:15px;background:#fff;border:1px solid #c4c4c4;border-right:none;border-bottom:none;border-top-left-radius:3px;box-sizing:border-box"></div>
<svg style="left:423px;top:52px" width="24" height="16" viewBox="0 0 24 16"><path d="M0 0.5 C6.16 0.5 7.92 4.20 11.00 7.28 C14.08 10.36 15.84 14.50 22 14.5 L24 14.5 L24 16 L0 16 Z" fill="#fff"/><path d="M0 0.5 C6.16 0.5 7.92 4.20 11.00 7.28 C14.08 10.36 15.84 14.50 22 14.5 L24 14.5" stroke="#b4b4b4" stroke-width="1" fill="none"/></svg>
<svg style="left:356px;top:55px" width="8" height="9" viewBox="0 0 8 9"><path d="M0.6 0.6 L5.2 0.6 L7.4 2.8 L7.4 8.4 L0.6 8.4 Z" fill="#ffffff" stroke="#c8985a" stroke-width="0.9"/><path d="M5.2 0.6 L7.4 2.8" stroke="#d8d040" stroke-width="1"/><path d="M2.2 2.6 L5.8 2.6" stroke="#3a6a7a" stroke-width="0.9"/><path d="M4 2.6 L4 7" stroke="#303038" stroke-width="0.8"/></svg>
<div class="t u" style="left:367.40px;top:55.80px;line-height:10px;font-size:8.4px;transform:scaleX(0.8747);transform-origin:0 0;color:#000">diagnostics.tsp</div>
<svg style="left:420px;top:56px" width="8" height="8" viewBox="0 0 8 8"><path d="M1.5 1.5 L6.5 6.5 M6.5 1.5 L1.5 6.5" stroke="#a8a8a8" stroke-width="2.2" stroke-linecap="square"/><path d="M1.5 1.5 L6.5 6.5 M6.5 1.5 L1.5 6.5" stroke="#fff" stroke-width="0.8" stroke-linecap="square"/></svg>
<div style="left:627px;top:56px;width:6px;height:3px;border:1px solid #8c8c8c;box-sizing:border-box;background:#fff"></div>
<div style="left:638px;top:55px;width:7px;height:7px;border:1px solid #8c8c8c;border-top-width:2px;box-sizing:border-box;background:#fff"></div>
<div style="left:145px;top:66px;width:208px;height:1px;background:#c4c4c4"></div>
<div style="left:447px;top:66px;width:201px;height:1px;background:#c4c4c4"></div>
<div style="left:145px;top:67px;width:502px;height:278px;background:#fff"></div>
<div style="left:146px;top:67px;width:7px;height:278px;background:#f0f0f0"></div>
<div style="left:145px;top:67px;width:484px;height:278px;overflow:hidden">
<div style="left:25px;top:143.108px;width:459px;height:10.416px;background:#e8f2fe"></div>
<div style="left:25px;top:143.108px;width:141px;height:10.416px;background:#c6dfb0"></div>
<div class="t" style="left:9px;top:-2.72px;width:14px;text-align:right;font-family:'Liberation Mono', monospace;font-size:8px;line-height:10.416px;color:#999999">426</div>
<div class="t" style="left:24.5px;top:-2.72px;font-family:'Liberation Mono', monospace;font-size:8.17px;line-height:10.416px;white-space:pre"></div>
<div class="t" style="left:9px;top:7.70px;width:14px;text-align:right;font-family:'Liberation Mono', monospace;font-size:8px;line-height:10.416px;color:#999999">427</div>
<div class="t" style="left:24.5px;top:7.70px;font-family:'Liberation Mono', monospace;font-size:8.17px;line-height:10.416px;white-space:pre"><span style="color:#2424f0;font-weight:bold">function</span><span style="color:#262626"> check_back_terminal()</span></div>
<div class="t" style="left:9px;top:18.12px;width:14px;text-align:right;font-family:'Liberation Mono', monospace;font-size:8px;line-height:10.416px;color:#999999">428</div>
<div class="t" style="left:24.5px;top:18.12px;font-family:'Liberation Mono', monospace;font-size:8.17px;line-height:10.416px;white-space:pre"><span style="color:#262626">    </span><span style="color:#2424f0;font-weight:bold">local</span><span style="color:#262626"> flag = 1</span></div>
<div class="t" style="left:9px;top:28.53px;width:14px;text-align:right;font-family:'Liberation Mono', monospace;font-size:8px;line-height:10.416px;color:#999999">429</div>
<div class="t" style="left:24.5px;top:28.53px;font-family:'Liberation Mono', monospace;font-size:8.17px;line-height:10.416px;white-space:pre"><span style="color:#262626">    </span><span style="color:#2424f0;font-weight:bold">if</span><span style="color:#262626"> dmm.terminals ~= dmm.TERMINALS_REAR </span><span style="color:#2424f0;font-weight:bold">then</span></div>
<div class="t" style="left:9px;top:38.95px;width:14px;text-align:right;font-family:'Liberation Mono', monospace;font-size:8px;line-height:10.416px;color:#999999">430</div>
<div class="t" style="left:24.5px;top:38.95px;font-family:'Liberation Mono', monospace;font-size:8.17px;line-height:10.416px;white-space:pre"><span style="color:#262626">        display.prompt(display.BUTTONS_OK, </span><span style="color:#a0204c">&quot;Switch instrument to use REAR terminals. Then select</span></div>
<div class="t" style="left:9px;top:49.36px;width:14px;text-align:right;font-family:'Liberation Mono', monospace;font-size:8px;line-height:10.416px;color:#999999">431</div>
<div class="t" style="left:24.5px;top:49.36px;font-family:'Liberation Mono', monospace;font-size:8.17px;line-height:10.416px;white-space:pre"><span style="color:#262626">        flag = 0</span></div>
<div class="t" style="left:9px;top:59.78px;width:14px;text-align:right;font-family:'Liberation Mono', monospace;font-size:8px;line-height:10.416px;color:#999999">432</div>
<div class="t" style="left:24.5px;top:59.78px;font-family:'Liberation Mono', monospace;font-size:8.17px;line-height:10.416px;white-space:pre"><span style="color:#262626">    </span><span style="color:#2424f0;font-weight:bold">end</span></div>
<div class="t" style="left:9px;top:70.20px;width:14px;text-align:right;font-family:'Liberation Mono', monospace;font-size:8px;line-height:10.416px;color:#999999">433</div>
<div class="t" style="left:24.5px;top:70.20px;font-family:'Liberation Mono', monospace;font-size:8.17px;line-height:10.416px;white-space:pre"><span style="color:#262626">    </span><span style="color:#2424f0;font-weight:bold">return</span><span style="color:#262626"> flag</span></div>
<div class="t" style="left:9px;top:80.61px;width:14px;text-align:right;font-family:'Liberation Mono', monospace;font-size:8px;line-height:10.416px;color:#999999">434</div>
<div class="t" style="left:24.5px;top:80.61px;font-family:'Liberation Mono', monospace;font-size:8.17px;line-height:10.416px;white-space:pre"><span style="color:#2424f0;font-weight:bold">end</span></div>
<div class="t" style="left:9px;top:91.03px;width:14px;text-align:right;font-family:'Liberation Mono', monospace;font-size:8px;line-height:10.416px;color:#999999">435</div>
<div class="t" style="left:24.5px;top:91.03px;font-family:'Liberation Mono', monospace;font-size:8.17px;line-height:10.416px;white-space:pre"></div>
<div class="t" style="left:9px;top:101.44px;width:14px;text-align:right;font-family:'Liberation Mono', monospace;font-size:8px;line-height:10.416px;color:#999999">436</div>
<div class="t" style="left:24.5px;top:101.44px;font-family:'Liberation Mono', monospace;font-size:8.17px;line-height:10.416px;white-space:pre"><span style="color:#2424f0;font-weight:bold">function</span><span style="color:#262626"> main()</span></div>
<div class="t" style="left:9px;top:111.86px;width:14px;text-align:right;font-family:'Liberation Mono', monospace;font-size:8px;line-height:10.416px;color:#999999">437</div>
<div class="t" style="left:24.5px;top:111.86px;font-family:'Liberation Mono', monospace;font-size:8.17px;line-height:10.416px;white-space:pre"><span style="color:#262626">    create_top_screens()</span></div>
<div class="t" style="left:9px;top:122.28px;width:14px;text-align:right;font-family:'Liberation Mono', monospace;font-size:8px;line-height:10.416px;color:#999999">438</div>
<div class="t" style="left:24.5px;top:122.28px;font-family:'Liberation Mono', monospace;font-size:8.17px;line-height:10.416px;white-space:pre"><span style="color:#262626">    </span><span style="color:#3a9e3a">--create the loading screen</span></div>
<div class="t" style="left:9px;top:132.69px;width:14px;text-align:right;font-family:'Liberation Mono', monospace;font-size:8px;line-height:10.416px;color:#999999">439</div>
<div class="t" style="left:24.5px;top:132.69px;font-family:'Liberation Mono', monospace;font-size:8.17px;line-height:10.416px;white-space:pre"><span style="color:#262626">    loading_screen_id = display.create(display.ROOT, display.OBJ_SCREEN, </span><span style="color:#a0204c">&quot;Loading, please wait</span></div>
<div class="t" style="left:9px;top:143.11px;width:14px;text-align:right;font-family:'Liberation Mono', monospace;font-size:8px;line-height:10.416px;color:#999999">440</div>
<div class="t" style="left:24.5px;top:143.11px;font-family:'Liberation Mono', monospace;font-size:8.17px;line-height:10.416px;white-space:pre"><span style="color:#262626">    create_screen_controls()</span></div>
<div class="t" style="left:9px;top:153.52px;width:14px;text-align:right;font-family:'Liberation Mono', monospace;font-size:8px;line-height:10.416px;color:#999999">441</div>
<div class="t" style="left:24.5px;top:153.52px;font-family:'Liberation Mono', monospace;font-size:8.17px;line-height:10.416px;white-space:pre"><span style="color:#262626">    display.changescreen(diagnostic_test)</span></div>
<div class="t" style="left:9px;top:163.94px;width:14px;text-align:right;font-family:'Liberation Mono', monospace;font-size:8px;line-height:10.416px;color:#999999">442</div>
<div class="t" style="left:24.5px;top:163.94px;font-family:'Liberation Mono', monospace;font-size:8.17px;line-height:10.416px;white-space:pre"><span style="color:#262626">    display.delete(loading_screen_id)  </span><span style="color:#3a9e3a">--delete the loading screen</span></div>
<div class="t" style="left:9px;top:174.36px;width:14px;text-align:right;font-family:'Liberation Mono', monospace;font-size:8px;line-height:10.416px;color:#999999">443</div>
<div class="t" style="left:24.5px;top:174.36px;font-family:'Liberation Mono', monospace;font-size:8.17px;line-height:10.416px;white-space:pre"><span style="color:#262626">    loading_screen_id = </span><span style="color:#2424f0;font-weight:bold">nil</span></div>
<div class="t" style="left:9px;top:184.77px;width:14px;text-align:right;font-family:'Liberation Mono', monospace;font-size:8px;line-height:10.416px;color:#999999">444</div>
<div class="t" style="left:24.5px;top:184.77px;font-family:'Liberation Mono', monospace;font-size:8.17px;line-height:10.416px;white-space:pre"><span style="color:#262626">    </span><span style="color:#3a9e3a">--check_front_terminal()</span></div>
<div class="t" style="left:9px;top:195.19px;width:14px;text-align:right;font-family:'Liberation Mono', monospace;font-size:8px;line-height:10.416px;color:#999999">445</div>
<div class="t" style="left:24.5px;top:195.19px;font-family:'Liberation Mono', monospace;font-size:8.17px;line-height:10.416px;white-space:pre"><span style="color:#2424f0;font-weight:bold">end</span></div>
<div class="t" style="left:9px;top:205.60px;width:14px;text-align:right;font-family:'Liberation Mono', monospace;font-size:8px;line-height:10.416px;color:#999999">446</div>
<div class="t" style="left:24.5px;top:205.60px;font-family:'Liberation Mono', monospace;font-size:8.17px;line-height:10.416px;white-space:pre"><span style="color:#262626">test_type = 1  </span><span style="color:#3a9e3a">-- 1: a fan test, a blown fuse test</span></div>
<div class="t" style="left:9px;top:216.02px;width:14px;text-align:right;font-family:'Liberation Mono', monospace;font-size:8px;line-height:10.416px;color:#999999">447</div>
<div class="t" style="left:24.5px;top:216.02px;font-family:'Liberation Mono', monospace;font-size:8.17px;line-height:10.416px;white-space:pre"><span style="color:#262626">fan_test_flag = 0   </span><span style="color:#3a9e3a">-- 0:pass 1: fail</span></div>
<div class="t" style="left:9px;top:226.44px;width:14px;text-align:right;font-family:'Liberation Mono', monospace;font-size:8px;line-height:10.416px;color:#999999">448</div>
<div class="t" style="left:24.5px;top:226.44px;font-family:'Liberation Mono', monospace;font-size:8.17px;line-height:10.416px;white-space:pre"><span style="color:#262626">fuse_test_flag = 0  </span><span style="color:#3a9e3a">--0: pass 1: fail</span></div>
<div class="t" style="left:9px;top:236.85px;width:14px;text-align:right;font-family:'Liberation Mono', monospace;font-size:8px;line-height:10.416px;color:#999999">449</div>
<div class="t" style="left:24.5px;top:236.85px;font-family:'Liberation Mono', monospace;font-size:8.17px;line-height:10.416px;white-space:pre"><span style="color:#262626">view_info_txt = {txt1,txt2,txt3,txt4,txt5,txt6,txt7,txt8,txt9,txt10,txt11,txt12,txt13,txt14,txt15</span></div>
<div class="t" style="left:9px;top:247.27px;width:14px;text-align:right;font-family:'Liberation Mono', monospace;font-size:8px;line-height:10.416px;color:#999999">450</div>
<div class="t" style="left:24.5px;top:247.27px;font-family:'Liberation Mono', monospace;font-size:8.17px;line-height:10.416px;white-space:pre"><span style="color:#3a9e3a">--information transform table</span></div>
<div class="t" style="left:9px;top:257.68px;width:14px;text-align:right;font-family:'Liberation Mono', monospace;font-size:8px;line-height:10.416px;color:#999999">451</div>
<div class="t" style="left:24.5px;top:257.68px;font-family:'Liberation Mono', monospace;font-size:8.17px;line-height:10.416px;white-space:pre"><span style="color:#262626">info_transform_tbl = {AnlgSerNum = </span><span style="color:#a0204c">&quot;Analog Serial Number&quot;</span><span style="color:#262626">,</span></div>
<div class="t" style="left:9px;top:268.10px;width:14px;text-align:right;font-family:'Liberation Mono', monospace;font-size:8px;line-height:10.416px;color:#999999">452</div>
<div class="t" style="left:24.5px;top:268.10px;font-family:'Liberation Mono', monospace;font-size:8.17px;line-height:10.416px;white-space:pre"><span style="color:#262626">AnlgBrdRev = </span><span style="color:#a0204c">&quot;Analog Board Revision&quot;</span><span style="color:#262626">,</span></div>
</div>
<svg style="left:147px;top:180px" width="6" height="6" viewBox="0 0 6 6"><circle cx="3" cy="3" r="2.3" fill="#f00a14"/><circle cx="2.4" cy="2.3" r="0.7" fill="#ff8080"/></svg>
<svg style="left:145px;top:211px" width="6" height="7" viewBox="0 0 6 7"><path d="M0.8 2 L2.8 2 L2.8 0.6 L5.4 3.3 L2.8 6 L2.8 4.6 L0.8 4.6 Z" fill="#4a78b8" stroke="#2a5090" stroke-width="0.5"/></svg>
<div style="left:629px;top:67px;width:10px;height:278px;background:#f0f0f0"></div>
<svg style="left:630px;top:76px" width="7" height="5" viewBox="0 0 7 5"><path d="M0.8 4.2 L3.5 1.3 L6.2 4.2" stroke="#555" stroke-width="1.1" fill="none"/></svg>
<svg style="left:630px;top:338px" width="7" height="5" viewBox="0 0 7 5"><path d="M0.8 0.8 L3.5 3.7 L6.2 0.8" stroke="#555" stroke-width="1.1" fill="none"/></svg>
<div style="left:629px;top:304px;width:9px;height:14px;background:#cdcdcd"></div>
<div style="left:639px;top:67px;width:8px;height:289px;background:#f0f0f0"></div>
<div style="left:640px;top:311px;width:5px;height:3px;border:1px solid #b8e0a0;box-sizing:border-box;background:#e8f8d8"></div>
<div style="left:145px;top:345px;width:484px;height:11px;background:#f0f0f0"></div>
<svg style="left:172px;top:347px" width="5" height="7" viewBox="0 0 5 7"><path d="M4.2 0.8 L1.3 3.5 L4.2 6.2" stroke="#555" stroke-width="1.1" fill="none"/></svg>
<div style="left:179px;top:346px;width:165px;height:9px;background:#cdcdcd"></div>
<svg style="left:621px;top:347px" width="5" height="7" viewBox="0 0 5 7"><path d="M0.8 0.8 L3.7 3.5 L0.8 6.2" stroke="#555" stroke-width="1.1" fill="none"/></svg>
<div style="left:144px;top:360px;width:159px;height:98px;border:1px solid #d0d0d0;border-radius:4px;box-sizing:border-box;background:#f0f0f0"></div>
<div style="left:145px;top:361px;width:157px;height:1px;background:#fbfbfb"></div>
<div style="left:145px;top:361px;width:76px;height:13px;background:#f7f7f7;border-top-left-radius:3px"></div>
<svg style="left:220px;top:360px" width="23" height="15" viewBox="0 0 23 15"><path d="M0 0.5 C5.88 0.5 7.56 3.90 10.50 6.76 C13.44 9.62 15.12 13.50 21 13.5 L23 13.5 L23 15 L0 15 Z" fill="#f7f7f7"/><path d="M0 0.5 C5.88 0.5 7.56 3.90 10.50 6.76 C13.44 9.62 15.12 13.50 21 13.5 L23 13.5" stroke="#b4b4b4" stroke-width="1" fill="none"/></svg>
<div style="left:241px;top:373px;width:61px;height:1px;background:#d4d4d4"></div>
<svg style="left:146px;top:363px" width="11" height="8" viewBox="0 0 11 8"><rect x="0.5" y="0.5" width="10" height="7" fill="#2a2a2a" stroke="#555" stroke-width="0.6"/><rect x="1.5" y="1.5" width="4" height="2.5" fill="#38a838"/><rect x="7" y="1.5" width="2.5" height="1.5" fill="#e05050"/><rect x="1.5" y="5" width="8" height="1.5" fill="#e8e8e8"/></svg>
<div class="t u" style="left:158.60px;top:362.30px;line-height:10px;font-size:8.4px;transform:scaleX(0.9021);transform-origin:0 0;color:#000">Instrument Con</div>
<svg style="left:217px;top:363px" width="8" height="8" viewBox="0 0 8 8"><path d="M1.5 1.5 L6.5 6.5 M6.5 1.5 L1.5 6.5" stroke="#a8a8a8" stroke-width="2.2" stroke-linecap="square"/><path d="M1.5 1.5 L6.5 6.5 M6.5 1.5 L1.5 6.5" stroke="#fff" stroke-width="0.8" stroke-linecap="square"/></svg>
<svg style="left:239px;top:361px" width="10" height="10" viewBox="0 0 10 10"><rect x="3" y="2" width="6" height="7.5" rx="0.8" fill="#eef2fa" stroke="#c8a060" stroke-width="0.8"/><rect x="4.5" y="1" width="3" height="1.8" fill="#b8b8c8"/><path d="M6 4 L6 8" stroke="#90a0c0" stroke-width="0.6"/><path d="M0.5 5.5 L2.8 8 L7 3" stroke="#1a6ae0" stroke-width="1.5" fill="none"/></svg>
<div class="t u" style="left:250.50px;top:362.30px;line-height:10px;font-size:8.4px;transform:scaleX(0.8197);transform-origin:0 0;color:#000">Tasks</div>
<div style="left:268px;top:362px;width:1px;height:10px;background:#e0e0e0"></div>
<div style="left:282px;top:363px;width:6px;height:3px;border:1px solid #8c8c8c;box-sizing:border-box;background:#fff"></div>
<div style="left:293px;top:362px;width:7px;height:7px;border:1px solid #8c8c8c;border-top-width:2px;box-sizing:border-box;background:#fff"></div>
<div class="t u" style="left:146.10px;top:376.10px;line-height:10px;font-size:8.4px;transform:scaleX(0.7794);transform-origin:0 0;color:#000">USB0::0x05E6::0x6500::04386016::INSTR</div>
<svg style="left:293px;top:377px" width="7" height="5" viewBox="0 0 7 5"><path d="M0.5 0.5 L6.5 0.5 L3.5 4 Z" fill="#fff" stroke="#8c8c8c" stroke-width="0.8"/></svg>
<svg style="left:213px;top:391px" width="11" height="9" viewBox="0 0 11 9"><rect x="0.5" y="0.5" width="10" height="8" fill="#222" stroke="#666" stroke-width="0.6"/><rect x="1.5" y="1.5" width="4" height="2.5" fill="#38a838"/><rect x="7" y="1.5" width="2.5" height="1.5" fill="#e05050"/><rect x="1.5" y="5.5" width="8" height="2" fill="#ddd"/></svg>
<div style="left:227px;top:390px;width:1px;height:11px;background:#c8c8c8"></div>
<svg style="left:233px;top:391px" width="10" height="10" viewBox="0 0 10 10"><path d="M1 9 L4 3 L7 1 L9 3 L7 7 L3 9 Z" fill="#f0e4d0" stroke="#c8b090" stroke-width="0.7"/><path d="M0.5 9.5 L9.5 9.5" stroke="#c8b090" stroke-width="0.7"/></svg>
<svg style="left:247px;top:391px" width="10" height="10" viewBox="0 0 10 10"><circle cx="5" cy="5" r="4.6" fill="#222"/><circle cx="5" cy="5" r="3.4" fill="#4a6ad8"/><circle cx="5" cy="5" r="1.8" fill="#f0e040"/></svg>
<svg style="left:261px;top:391px" width="10" height="10" viewBox="0 0 10 10"><circle cx="5" cy="5" r="4.8" fill="#e82020"/><text x="5" y="7.8" font-size="8" font-family="Liberation Sans" text-anchor="middle" fill="#fff">S</text></svg>
<svg style="left:275px;top:391px" width="10" height="10" viewBox="0 0 10 10"><rect x="0.5" y="0.5" width="9" height="9" fill="#f4f4f4" stroke="#c8c8c8"/><path d="M2 8 L2 5 L5 3 L8 6" stroke="#c0c0c0" stroke-width="0.8" fill="none"/></svg>
<div style="left:289px;top:393px;width:9px;height:6px;background:#a8a8a8;border:1px solid #909090;box-sizing:border-box"></div>
<div style="left:144px;top:403px;width:158px;height:1px;background:#d0d0d0"></div>
<div style="left:145px;top:404px;width:147px;height:53px;background:#fff"></div>
<div class="t u" style="left:146.20px;top:420.40px;line-height:9px;font-size:8.4px;transform:scaleX(0.7720);transform-origin:0 0;color:#3a3af4">TSP&gt;</div>
<div class="t u" style="left:146.20px;top:438.70px;line-height:9px;font-size:8.4px;transform:scaleX(0.7720);transform-origin:0 0;color:#3a3af4">TSP&gt;</div>
<div class="t u" style="left:146.20px;top:447.90px;line-height:9px;font-size:8.4px;transform:scaleX(0.7720);transform-origin:0 0;color:#3a3af4">TSP&gt;</div>
<div style="left:292px;top:404px;width:10px;height:53px;background:#f0f0f0"></div>
<svg style="left:293px;top:407px" width="7" height="5" viewBox="0 0 7 5"><path d="M0.8 4.2 L3.5 1.3 L6.2 4.2" stroke="#555" stroke-width="1.1" fill="none"/></svg>
<svg style="left:293px;top:450px" width="7" height="5" viewBox="0 0 7 5"><path d="M0.8 0.8 L3.5 3.7 L6.2 0.8" stroke="#555" stroke-width="1.1" fill="none"/></svg>
<div style="left:292px;top:424px;width:9px;height:16px;background:#cdcdcd"></div>
<div style="left:305px;top:360px;width:101px;height:98px;border:1px solid #c8c8c8;border-radius:4px;box-sizing:border-box;background:#fafafa"></div>
<svg style="left:308px;top:363px" width="10" height="9" viewBox="0 0 10 9"><path d="M2.5 2.5 L7 6.5" stroke="#8090a0" stroke-width="0.8"/><circle cx="2.5" cy="2.5" r="1.9" fill="#5a98e0" stroke="#2a5aa8" stroke-width="0.6"/><circle cx="7" cy="6.3" r="1.9" fill="#5a98e0" stroke="#2a5aa8" stroke-width="0.6"/></svg>
<div class="t u" style="left:319.30px;top:362.30px;line-height:10px;font-size:8.4px;transform:scaleX(0.9816);transform-origin:0 0;color:#000">B</div>
<svg style="left:327px;top:359px" width="52" height="16" viewBox="0 0 52 16"><defs><linearGradient id="g1" x1="0" y1="0" x2="0" y2="1"><stop offset="0" stop-color="#e6eef8"/><stop offset="1" stop-color="#a9c4e2"/></linearGradient></defs><path d="M0.5 16 L0.5 4 Q0.5 1 3.5 1 L31 1 C38 1 41 14.5 50 14.5 L52 14.5 L52 16 Z" fill="url(#g1)" stroke="#9fb6d4" stroke-width="0.8"/></svg>
<svg style="left:330px;top:362px" width="12" height="9" viewBox="0 0 12 9"><text x="0" y="7" font-size="7.2" font-family="Liberation Sans" font-weight="bold" fill="#3a4a72" letter-spacing="-0.4">(x)=</text></svg>
<div class="t u" style="left:341.70px;top:362.30px;line-height:10px;font-size:8.4px;transform:scaleX(1.1065);transform-origin:0 0;color:#000">V</div>
<svg style="left:353px;top:363px" width="8" height="8" viewBox="0 0 8 8"><path d="M1.5 1.5 L6.5 6.5 M6.5 1.5 L1.5 6.5" stroke="#8090a8" stroke-width="2.2" stroke-linecap="square"/><path d="M1.5 1.5 L6.5 6.5 M6.5 1.5 L1.5 6.5" stroke="#fff" stroke-width="0.8" stroke-linecap="square"/></svg>
<div style="left:384px;top:363px;width:6px;height:3px;border:1px solid #8c8c8c;box-sizing:border-box;background:#fff"></div>
<div style="left:395px;top:362px;width:7px;height:7px;border:1px solid #8c8c8c;border-top-width:2px;box-sizing:border-box;background:#fff"></div>
<div style="left:305px;top:374px;width:101px;height:84px;border:1px solid #99b4d1;border-top:2px solid #99b4d1;box-sizing:border-box;background:#f0f0f0"></div>
<svg style="left:352px;top:378px" width="10" height="10" viewBox="0 0 10 10"><path d="M2.5 1 L5 1 L5 3 L8 3 L9.5 4.5 L9.5 9 L2.5 9 Z" fill="#f4f4f4" stroke="#c8c8c8" stroke-width="0.8"/><path d="M1 2 L4 5" stroke="#c0c0c0" stroke-width="0.9"/></svg>
<svg style="left:366px;top:378px" width="10" height="10" viewBox="0 0 10 10"><path d="M0.5 4.5 L3 2 L5 4.5 L3 7 Z" fill="#f0c040" stroke="#b08020" stroke-width="0.5"/><path d="M5 4.5 L7 4.5 M7 1.5 L7 8.5" stroke="#707070" stroke-width="0.7"/><rect x="7.5" y="1" width="2" height="1.5" fill="#e03838"/><rect x="7.5" y="4" width="2" height="1.5" fill="#e03838"/><rect x="7.5" y="7" width="2" height="1.5" fill="#e03838"/></svg>
<svg style="left:381px;top:378px" width="10" height="10" viewBox="0 0 10 10"><rect x="0.5" y="0.5" width="7" height="7" rx="1.5" fill="#dde6f0" stroke="#8aa0c0" stroke-width="0.7"/><rect x="2" y="2" width="7.5" height="7.5" rx="1.5" fill="#f4f8fc" stroke="#7890b0" stroke-width="0.8"/><rect x="3.2" y="5.1" width="5" height="1.3" fill="#3a6aa8"/></svg>
<svg style="left:395px;top:377px" width="7" height="5" viewBox="0 0 7 5"><path d="M0.5 0.5 L6.5 0.5 L3.5 4 Z" fill="#fff" stroke="#8c8c8c" stroke-width="0.8"/></svg>
<div style="left:306px;top:389px;width:99px;height:1px;background:#d0d0d0"></div>
<div style="left:306px;top:390px;width:98px;height:56px;background:#fff"></div>
<div class="t u" style="left:310.90px;top:392.80px;line-height:10px;font-size:8.4px;transform:scaleX(0.8971);transform-origin:0 0;color:#000">Name</div>
<div style="left:306px;top:415px;width:98px;height:1px;background:#ececec"></div>
<div style="left:306px;top:426px;width:98px;height:1px;background:#ececec"></div>
<div style="left:306px;top:437px;width:98px;height:1px;background:#ececec"></div>
<svg style="left:321px;top:405px" width="10" height="10" viewBox="0 0 10 10"><circle cx="5" cy="5" r="4.6" fill="#5a8ee8"/></svg>
<div class="t u" style="left:333.40px;top:405.80px;line-height:10px;font-size:8.4px;transform:scaleX(0.8595);transform-origin:0 0;color:#000">loading_screen_id</div>
<svg style="left:321px;top:416px" width="10" height="10" viewBox="0 0 10 10"><circle cx="5" cy="5" r="4.6" fill="#5a8ee8"/></svg>
<div class="t u" style="left:333.40px;top:416.80px;line-height:10px;font-size:8.4px;transform:scaleX(0.8816);transform-origin:0 0;color:#000">diagnostic_test</div>
<div style="left:306px;top:446px;width:98px;height:11px;background:#f0f0f0"></div>
<svg style="left:310px;top:448px" width="5" height="7" viewBox="0 0 5 7"><path d="M4.2 0.8 L1.3 3.5 L4.2 6.2" stroke="#555" stroke-width="1.1" fill="none"/></svg>
<div style="left:318px;top:447px;width:21px;height:9px;background:#cdcdcd"></div>
<svg style="left:397px;top:448px" width="5" height="7" viewBox="0 0 5 7"><path d="M0.8 0.8 L3.7 3.5 L0.8 6.2" stroke="#555" stroke-width="1.1" fill="none"/></svg>
<div style="left:408px;top:360px;width:240px;height:98px;border:1px solid #d0d0d0;border-radius:4px;box-sizing:border-box;background:#f0f0f0"></div>
<div style="left:409px;top:361px;width:238px;height:1px;background:#fbfbfb"></div>
<div style="left:409px;top:361px;width:44px;height:13px;background:#f7f7f7;border-top-left-radius:3px"></div>
<svg style="left:452px;top:360px" width="23" height="15" viewBox="0 0 23 15"><path d="M0 0.5 C5.88 0.5 7.56 3.90 10.50 6.76 C13.44 9.62 15.12 13.50 21 13.5 L23 13.5 L23 15 L0 15 Z" fill="#f7f7f7"/><path d="M0 0.5 C5.88 0.5 7.56 3.90 10.50 6.76 C13.44 9.62 15.12 13.50 21 13.5 L23 13.5" stroke="#b4b4b4" stroke-width="1" fill="none"/></svg>
<div style="left:473px;top:373px;width:174px;height:1px;background:#d4d4d4"></div>
<svg style="left:410px;top:362px" width="9" height="9" viewBox="0 0 9 9"><g transform="scale(0.9)"><path d="M5 0.3 L5.9 2.2 L8.2 0.9 L7.6 3.3 L9.8 4.3 L7.9 5.4 L9.3 7.6 L6.9 7.3 L6.5 9.7 L5 8 L3.3 9.6 L3.1 7.3 L0.6 7.5 L2.1 5.4 L0.2 4.2 L2.4 3.3 L1.8 0.9 L4.1 2.2 Z" fill="#2e6a58" stroke="#1a3a30" stroke-width="0.4"/><circle cx="5" cy="5" r="2.6" fill="#5aae3a"/><circle cx="4.6" cy="4.5" r="1.4" fill="#d8f0a0"/></g></svg>
<div class="t u" style="left:422.50px;top:362.30px;line-height:10px;font-size:8.4px;transform:scaleX(0.8686);transform-origin:0 0;color:#000">Debug</div>
<svg style="left:448px;top:363px" width="8" height="8" viewBox="0 0 8 8"><path d="M1.5 1.5 L6.5 6.5 M6.5 1.5 L1.5 6.5" stroke="#a8a8a8" stroke-width="2.2" stroke-linecap="square"/><path d="M1.5 1.5 L6.5 6.5 M6.5 1.5 L1.5 6.5" stroke="#fff" stroke-width="0.8" stroke-linecap="square"/></svg>
<svg style="left:470px;top:361px" width="11" height="10" viewBox="0 0 11 10"><path d="M0.5 1.5 L10.5 1.5 M0.5 3.5 L10.5 3.5 M0.5 5.5 L10.5 5.5 M0.5 7.5 L10.5 7.5 M0.5 9.3 L10.5 9.3" stroke="#505860" stroke-width="0.8"/><circle cx="5.5" cy="5.2" r="3" fill="#2e6a58"/><circle cx="5.5" cy="5.2" r="1.8" fill="#9ad860"/></svg>
<div class="t u" style="left:482.70px;top:362.30px;line-height:10px;font-size:8.4px;transform:scaleX(0.8662);transform-origin:0 0;color:#000">Debug Log</div>
<div style="left:519px;top:362px;width:1px;height:10px;background:#e0e0e0"></div>
<svg style="left:523px;top:362px" width="11" height="10" viewBox="0 0 11 10"><rect x="0.5" y="1" width="8" height="4.5" fill="#e8f4e0" stroke="#3a9a3a" stroke-width="0.7"/><rect x="1.5" y="2" width="4" height="2.5" fill="#4ab84a"/><circle cx="7.5" cy="7" r="2.6" fill="#38a038" stroke="#1a6a1a" stroke-width="0.5"/><path d="M6.3 7 L8.7 7 M7.5 5.8 L8.7 7 L7.5 8.2" stroke="#fff" stroke-width="0.7" fill="none"/></svg>
<div class="t u" style="left:534.70px;top:362.30px;line-height:10px;font-size:8.4px;transform:scaleX(0.8479);transform-origin:0 0;color:#000">Progress</div>
<div style="left:564px;top:362px;width:1px;height:10px;background:#e0e0e0"></div>
<div style="left:627px;top:363px;width:6px;height:3px;border:1px solid #8c8c8c;box-sizing:border-box;background:#fff"></div>
<div style="left:638px;top:362px;width:7px;height:7px;border:1px solid #8c8c8c;border-top-width:2px;box-sizing:border-box;background:#fff"></div>
<svg style="left:487px;top:377px" width="9" height="9" viewBox="0 0 9 9"><path d="M1 1 L8 8 M8 1 L1 8" stroke="#c8c8c8" stroke-width="2"/><circle cx="4.5" cy="4.5" r="2" fill="#d8d8d8"/></svg>
<svg style="left:500px;top:377px" width="10" height="9" viewBox="0 0 10 9"><rect x="0.5" y="1" width="3" height="7" fill="#f0c838" stroke="#b89020" stroke-width="0.7"/><path d="M4.5 0.5 L9.8 4.5 L4.5 8.5 Z" fill="#3aa040"/></svg>
<svg style="left:516px;top:377px" width="7" height="9" viewBox="0 0 7 9"><rect x="0.5" y="0.5" width="2.3" height="8" fill="#eee" stroke="#c8c8c8" stroke-width="0.8"/><rect x="4.2" y="0.5" width="2.3" height="8" fill="#eee" stroke="#c8c8c8" stroke-width="0.8"/></svg>
<svg style="left:530px;top:378px" width="7" height="7" viewBox="0 0 7 7"><rect x="0" y="0" width="7" height="7" fill="#e8404c"/></svg>
<svg style="left:543px;top:377px" width="9" height="9" viewBox="0 0 9 9"><path d="M1 8 L8 1" stroke="#d0c0c0" stroke-width="1.2"/><circle cx="2" cy="7" r="1.5" fill="#e0b0b0"/><circle cx="7" cy="2" r="1.5" fill="#d0d0d0"/></svg>
<div style="left:556px;top:376px;width:1px;height:11px;background:#c8c8c8"></div>
<svg style="left:562px;top:377px" width="11" height="10" viewBox="0 0 11 10"><path d="M0.8 1.8 L4.5 1.8 L6.3 4.6" stroke="#e2b84a" stroke-width="2.2" fill="none" stroke-linejoin="round"/><path d="M6.6 3.1000000000000005 L8.899999999999999 5.4 L6.6 7.7 L4.3 5.4 Z" fill="#f4d060" stroke="#b89028" stroke-width="0.6"/><circle cx="6.6" cy="5.4" r="0.8" fill="#fff8d0"/><rect x="0.5" y="7" width="2.6" height="1.4" rx="0.6" fill="#2a4670"/><rect x="7.2" y="7" width="2.8" height="1.4" rx="0.6" fill="#2a4670"/></svg>
<svg style="left:576px;top:377px" width="11" height="10" viewBox="0 0 11 10"><path d="M1.3 5 L3 2 L7 2 L8.4 4.2" stroke="#e2b84a" stroke-width="2.2" fill="none" stroke-linejoin="round"/><path d="M8.4 2.9000000000000004 L10.7 5.2 L8.4 7.5 L6.1000000000000005 5.2 Z" fill="#f4d060" stroke="#b89028" stroke-width="0.6"/><circle cx="8.4" cy="5.2" r="0.8" fill="#fff8d0"/><rect x="3" y="7" width="3" height="1.4" rx="0.6" fill="#2a4670"/></svg>
<svg style="left:591px;top:377px" width="11" height="10" viewBox="0 0 11 10"><rect x="0.3" y="7" width="2.6" height="1.4" rx="0.6" fill="#2a4670"/><path d="M5 8.5 L5.6 4 L7.2 3" stroke="#e2b84a" stroke-width="2.2" fill="none" stroke-linejoin="round"/><path d="M7.6 0.5 L9.899999999999999 2.8 L7.6 5.1 L5.3 2.8 Z" fill="#f4d060" stroke="#b89028" stroke-width="0.6"/><circle cx="7.6" cy="2.8" r="0.8" fill="#fff8d0"/><rect x="7.6" y="7" width="2.4" height="1.4" rx="0.6" fill="#2a4670"/></svg>
<svg style="left:604px;top:377px" width="10" height="10" viewBox="0 0 10 10"><path d="M1 1.5 L8 1.5 M1 3.5 L8 3.5 M1 5.5 L6 5.5" stroke="#777" stroke-width="0.9"/><path d="M5 6 L9 8 L6 9.5 Z" fill="#e0e0e0" stroke="#888" stroke-width="0.5"/></svg>
<div style="left:618px;top:376px;width:1px;height:11px;background:#c8c8c8"></div>
<svg style="left:622px;top:377px" width="10" height="10" viewBox="0 0 10 10"><path d="M1 8 L4 4 L6 6 L9 2" stroke="#d0d0d0" stroke-width="1.2" fill="none"/><path d="M2 2 L8 8" stroke="#d8d8d8" stroke-width="0.8"/></svg>
<svg style="left:638px;top:378px" width="7" height="5" viewBox="0 0 7 5"><path d="M0.5 0.5 L6.5 0.5 L3.5 4 Z" fill="#fff" stroke="#8c8c8c" stroke-width="0.8"/></svg>
<div style="left:408px;top:388px;width:240px;height:1px;background:#d8d8d8"></div>
<div style="left:409px;top:389px;width:238px;height:57px;background:#fff"></div>
<svg style="left:423px;top:390px" width="8" height="8" viewBox="0 0 8 8"><rect x="0.5" y="0.5" width="7" height="7" fill="#fff" stroke="#606060" stroke-width="0.9"/><rect x="0" y="0" width="8" height="2" fill="#2a4a9a"/></svg>
<div class="t u" style="left:435.20px;top:391.20px;line-height:10px;font-size:8.4px;transform:scaleX(0.8838);transform-origin:0 0;color:#000">/diagnostics/diagnostics.tsp [TSP Script]</div>
<svg style="left:435px;top:401px" width="10" height="10" viewBox="0 0 10 10"><circle cx="6.5" cy="3.5" r="2.8" fill="#e8b040" stroke="#8a6010" stroke-width="0.6"/><circle cx="6.5" cy="3.5" r="1" fill="#8a6010"/><rect x="0.5" y="5" width="4.5" height="4.5" rx="1" fill="#ecc870" stroke="#a07818" stroke-width="0.5"/><path d="M2 5 L2 9.5 M3.5 5 L3.5 9.5" stroke="#a07818" stroke-width="0.4"/><path d="M0.5 2.5 L2.5 0.5 M5.5 9.5 L8.5 8" stroke="#2a6ad8" stroke-width="1"/></svg>
<div class="t u" style="left:447.50px;top:402.20px;line-height:10px;font-size:8.4px;transform:scaleX(0.7788);transform-origin:0 0;color:#000">USB0::0x05E6::0x6500::04386016::INSTR</div>
<svg style="left:446px;top:413px" width="10" height="10" viewBox="0 0 10 10"><circle cx="6.5" cy="3.2" r="2.8" fill="#e8b040" stroke="#8a6010" stroke-width="0.6"/><circle cx="6.5" cy="3.2" r="1" fill="#8a6010"/><rect x="0.5" y="4.5" width="4.5" height="5" rx="1" fill="#ecc870" stroke="#a07818" stroke-width="0.5"/><path d="M2 4.5 L2 9.5 M3.5 4.5 L3.5 9.5" stroke="#a07818" stroke-width="0.4"/></svg>
<div class="t u" style="left:458.70px;top:413.20px;line-height:10px;font-size:8.4px;transform:scaleX(0.8614);transform-origin:0 0;color:#000">Script Stack</div>
<div style="left:456px;top:423px;width:124px;height:10px;background:#d9d9d9"></div>
<div style="left:0px;top:0px;width:647px;height:479px;overflow:hidden">
<svg style="left:459px;top:424px" width="8" height="8" viewBox="0 0 8 8"><path d="M0 1.2 L7.5 1.2 M0 4 L7.5 4 M0 6.8 L7.5 6.8" stroke="#2a64b0" stroke-width="1.2"/></svg>
<div class="t u" style="left:470.70px;top:423.80px;line-height:10px;font-size:8.4px;transform:scaleX(0.8640);transform-origin:0 0;color:#000">main() at diagnostics.tsp line: 440</div>
<svg style="left:459px;top:435px" width="8" height="8" viewBox="0 0 8 8"><path d="M0 1.2 L7.5 1.2 M0 4 L7.5 4 M0 6.8 L7.5 6.8" stroke="#2a64b0" stroke-width="1.2"/></svg>
<div class="t u" style="left:470.70px;top:434.80px;line-height:10px;font-size:8.4px;transform:scaleX(0.8813);transform-origin:0 0;color:#000">/diagnostics/diagnostics.tsp() at diagnostics.tsp line: 440</div>
</div>
<div style="left:647px;top:389px;width:1px;height:57px;background:#d0d0d0"></div>
<div style="left:409px;top:446px;width:238px;height:11px;background:#f0f0f0"></div>
<svg style="left:412px;top:448px" width="5" height="7" viewBox="0 0 5 7"><path d="M4.2 0.8 L1.3 3.5 L4.2 6.2" stroke="#555" stroke-width="1.1" fill="none"/></svg>
<div style="left:420px;top:447px;width:209px;height:9px;background:#cdcdcd"></div>
<svg style="left:639px;top:448px" width="5" height="7" viewBox="0 0 5 7"><path d="M0.8 0.8 L3.7 3.5 L0.8 6.2" stroke="#555" stroke-width="1.1" fill="none"/></svg>
<div style="left:473px;top:460px;width:1px;height:13px;background:#d8d8d8"></div>
<div class="t u" style="left:479.50px;top:462.10px;line-height:10px;font-size:8.4px;transform:scaleX(0.8839);transform-origin:0 0;color:#000">Debugging /diagnostics...agnostics.tsp</div>
<div style="left:614px;top:463px;width:18px;height:7px;background:#10b830;border:1px solid #c8c8c8;box-sizing:content-box;width:17px;height:5px"></div>
<svg style="left:636px;top:462px" width="10" height="9" viewBox="0 0 10 9"><rect x="0.5" y="2" width="7" height="5" fill="#d8d8c8" stroke="#808070" stroke-width="0.6"/><rect x="2" y="0.5" width="7" height="5" fill="#e8e8d8" stroke="#909080" stroke-width="0.6"/><circle cx="7" cy="6.5" r="2.2" fill="#30a030"/></svg>
</body></html>
